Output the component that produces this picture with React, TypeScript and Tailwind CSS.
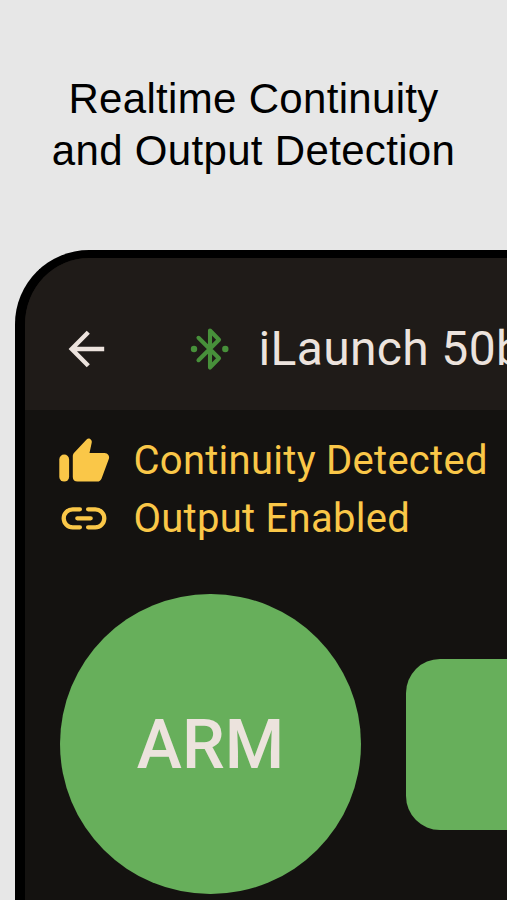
import type { ReactNode } from "react";

function BackIcon() {
  return (
    <svg viewBox="0 0 48 48" className="h-12 w-12 shrink-0" fill="none" stroke="#ece3dd" strokeWidth="4.4">
      <path d="M44.200 24H13.200M28.300 7.300 11.700 24l16.600 16.700" />
    </svg>
  );
}

function BluetoothIcon() {
  return (
    <svg viewBox="0 0 48 48" className="h-12 w-12 shrink-0" fill="none" stroke="#47903a" strokeWidth="4.1" strokeLinecap="round" strokeLinejoin="round">
      <path d="M12.500 12.800 33 33.300 24 42.500V5.500L33 14.700 12.500 35.200" />
      <circle cx="8" cy="24" r="3.2" fill="#47903a" stroke="none" />
      <circle cx="39.3" cy="24" r="3.2" fill="#47903a" stroke="none" />
    </svg>
  );
}

function ThumbIcon() {
  return (
    <svg viewBox="0 0 52 52" className="h-[52px] w-[52px] shrink-0" fill="#fac748">
      <rect x="1.3" y="19.6" width="9.8" height="27" rx="4.9" />
      <path d="M14.8 21.500c0-1.600.6-2.900 1.600-3.900L28.600 4.600c1-1.100 2.300-1.300 3.500-.6 1.500.8 2 2.300 1.600 3.800L31.500 17.900H46.500c3.400 0 5.500 3.100 4.300 6.200L43.600 43.500c-.8 2-2.300 3.100-4.400 3.100H19.600c-2.900 0-4.800-1.900-4.800-4.700Z" />
    </svg>
  );
}

function LinkIcon() {
  return (
    <svg viewBox="0 0 52 52" className="h-[52px] w-[52px] shrink-0" fill="none" stroke="#fac748" strokeWidth="4.3" strokeLinecap="round">
      <path d="M21.900 16.300H14.700a9 9 0 0 0 0 18H21.900M30.100 16.300H37.300a9 9 0 0 1 0 18H30.100M19.300 25.300H32.700" />
    </svg>
  );
}

function Status({ icon, children }: { icon: ReactNode; children: ReactNode }) {
  return (
    <div className="flex h-[58px] items-center gap-[23.500px] whitespace-nowrap text-[40px] tracking-[0.270px] text-[#fac748]">
      {icon}
      <span>{children}</span>
    </div>
  );
}

export default function App() {
  return (
    <div className="h-[900px] w-[507px] overflow-hidden bg-[#e7e7e7] font-['Roboto',sans-serif]">
      <h1 className="h-[250px] pt-[73px] text-center font-['Liberation_Sans',Arial,sans-serif] text-[42px] leading-[51.500px] tracking-[0.320px] text-black">
        Realtime Continuity
        <br />
        and Output Detection
      </h1>
      <main className="ml-[15px] h-[750px] w-[600px] overflow-hidden rounded-tl-[74px] border-l-[10px] border-t-8 border-black bg-[#141210]">
        <header className="flex h-[152px] items-center bg-[#1f1b18] pl-[35px] pt-[30px]">
          <BackIcon />
          <div className="ml-[78px]">
            <BluetoothIcon />
          </div>
          <span className="ml-[24.500px] whitespace-nowrap text-[48px] leading-none tracking-[0.350px] text-[#ece3dd]">iLaunch 50b</span>
        </header>
        <section className="pl-[33px] pt-[22px]">
          <Status icon={<ThumbIcon />}>Continuity Detected</Status>
          <Status icon={<LinkIcon />}>Output Enabled</Status>
        </section>
        <section className="flex items-center gap-[45px] pl-[35px] pt-[46px]">
          <button className="flex h-[300px] w-[301px] shrink-0 items-center justify-center rounded-full bg-[#67af5b] pt-[2px] text-[68px] font-medium text-[#ece3dd]">
            ARM
          </button>
          <div className="h-[171px] w-[171px] shrink-0 rounded-[34px] bg-[#67af5b]" />
        </section>
      </main>
    </div>
  );
}
